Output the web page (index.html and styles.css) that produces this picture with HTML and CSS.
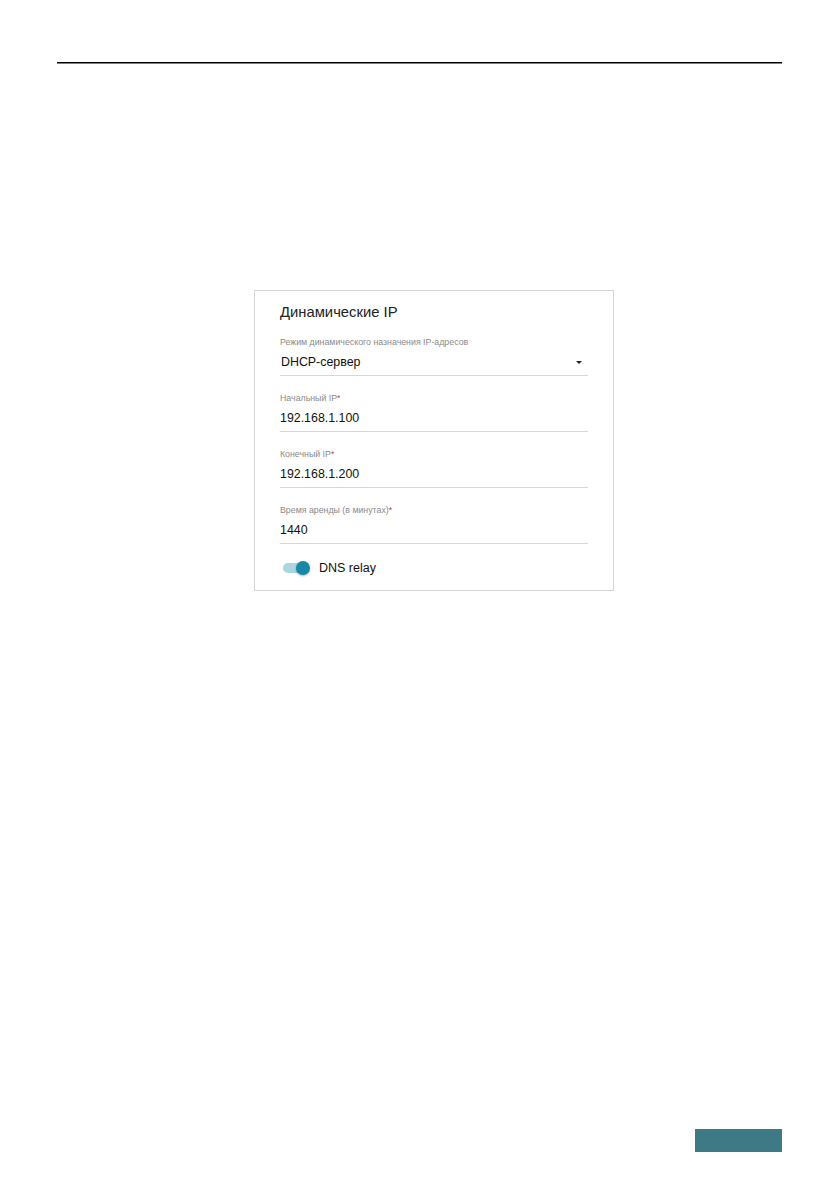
FILE: index.html
```html
<!DOCTYPE html>
<html lang="ru">
<head>
<meta charset="utf-8">
<title>Динамические IP</title>
<link rel="stylesheet" href="styles.css">
</head>
<body>
<div class="page">
  <div class="rule"></div>
  <section class="card">
    <h2 class="card-title">Динамические IP</h2>
    <div class="field">
      <div class="label">Режим динамического назначения IP-адресов</div>
      <div class="value select">
        <span>DHCP-сервер</span>
        <span class="caret"></span>
      </div>
    </div>
    <div class="field">
      <div class="label">Начальный IP<span class="req">*</span></div>
      <div class="value">192.168.1.100</div>
    </div>
    <div class="field">
      <div class="label">Конечный IP<span class="req">*</span></div>
      <div class="value">192.168.1.200</div>
    </div>
    <div class="field">
      <div class="label">Время аренды (в минутах)<span class="req">*</span></div>
      <div class="value">1440</div>
    </div>
    <div class="toggle-row">
      <span class="toggle"><span class="knob"></span></span>
      <span class="toggle-label">DNS relay</span>
    </div>
  </section>
  <div class="footer-tab"></div>
</div>
</body>
</html>
```
FILE: styles.css
```css
html, body {
  margin: 0;
  padding: 0;
  background: #fff;
}
body {
  font-family: "Liberation Sans", Arial, sans-serif;
  color: #222;
}
.page {
  width: 839px;
  height: 1191px;
  display: flex;
  flex-direction: column;
  box-sizing: border-box;
  padding-top: 62px;
}
.rule {
  margin: 0 57px 0 57px;
  height: 1px;
  background: #000;
  box-shadow: 0 0.5px 0 #000;
}
.card {
  margin-top: 227px;
  margin-left: 254px;
  width: 360px;
  box-sizing: border-box;
  border: 1px solid #d4d4d4;
  padding: 11px 25px 12px 25px;
}
.card-title {
  margin: 0;
  font-size: 14.8px;
  line-height: 20px;
  font-weight: 400;
  color: #222;
}
.field {
  margin-top: 16px;
  border-bottom: 1px solid #d6d6d6;
  padding-bottom: 3px;
}
.card-title + .field {
  margin-top: 14px;
}
.label {
  font-size: 8.8px;
  line-height: 12px;
  color: #8a8a8a;
  margin-bottom: 4px;
}
.req {
  color: #e4353c;
}
.value {
  font-size: 12.4px;
  line-height: 20px;
  color: #111;
}
.select {
  display: flex;
  align-items: center;
  justify-content: space-between;
  padding-right: 6px;
  padding-left: 1px;
}
.caret {
  width: 0;
  height: 0;
  border-left: 3px solid transparent;
  border-right: 3px solid transparent;
  border-top: 3.5px solid #222;
}
.toggle-row {
  margin-top: 14px;
  height: 20px;
  display: flex;
  align-items: center;
  padding-left: 3px;
}
.toggle {
  position: relative;
  width: 26px;
  height: 10px;
  border-radius: 5px;
  background: #a9d6df;
}
.knob {
  position: absolute;
  right: -1px;
  top: -2px;
  width: 14px;
  height: 14px;
  border-radius: 50%;
  background: #1788a8;
  box-shadow: 0 1px 2px rgba(0, 0, 0, 0.3);
}
.toggle-label {
  margin-left: 10px;
  font-size: 12.5px;
  color: #111;
}
.footer-tab {
  margin-top: auto;
  margin-bottom: 39px;
  align-self: flex-end;
  margin-right: 57px;
  width: 87px;
  height: 23px;
  background: #3e7a85;
}
```
